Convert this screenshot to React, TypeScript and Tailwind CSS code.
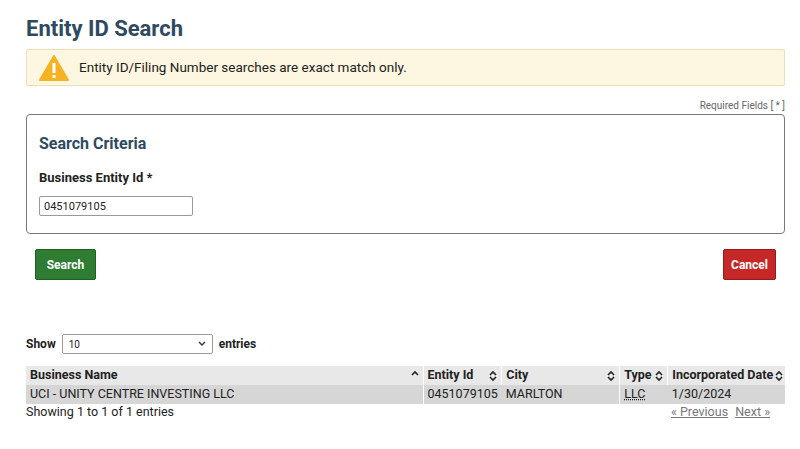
const SortIcon = ({ up = true, down = true }: { up?: boolean; down?: boolean }) => (
  <svg width="8" height="12" viewBox="0 0 8 12" className="shrink-0">
    {up && <path d="M1 5 L4 2 L7 5" fill="none" stroke="#222" strokeWidth="1.6" />}
    {down && <path d="M1 7 L4 10 L7 7" fill="none" stroke="#222" strokeWidth="1.6" />}
  </svg>
);

export default function App() {
  return (
    <main className="w-[800px] h-[449px] bg-white pl-[26px] pr-[15px] pt-[15px] text-[#222]" style={{ fontFamily: 'Roboto, sans-serif' }}>
      <h1 className="text-[22px] font-bold leading-[28px] text-[#2e4a5f]">Entity ID Search</h1>
      <div className="mt-[6px] flex h-[37px] items-center gap-[10px] rounded-[2px] border border-[#eadfb8] bg-[#fdf6e0] px-[12px] text-[13.5px]">
        <svg width="30" height="26" viewBox="0 0 30 26">
          <path d="M15 1 L29 25 L1 25 Z" fill="#f5b324" stroke="#f5b324" strokeWidth="2" strokeLinejoin="round" />
          <rect x="13.5" y="8" width="3" height="10" fill="#fff" />
          <rect x="13.5" y="20" width="3" height="3" fill="#fff" />
        </svg>
        <span>Entity ID/Filing Number searches are exact match only.</span>
      </div>
      <div className="mt-[14px] text-right text-[10px] leading-[12px] text-[#666]">Required Fields [ * ]</div>
      <section className="mt-[2px] h-[120px] rounded-[4px] border border-[#777] px-[12px] pt-[19px]">
        <h2 className="text-[16px] font-bold leading-[20px] text-[#2e4a5f]">Search Criteria</h2>
        <label className="mt-[16px] block text-[13px] font-bold leading-[16px]">Business Entity Id *</label>
        <input
          defaultValue="0451079105"
          className="mt-[10px] h-[20px] w-[154px] rounded-[2px] border border-[#999] px-[4px] text-[11px]"
        />
      </section>
      <div className="mt-[15px] flex justify-between px-[9px]">
        <button className="h-[31px] w-[61px] rounded-[2px] border border-[#1e5e22] bg-[#2e7d32] text-[12px] font-bold text-white">Search</button>
        <button className="h-[31px] w-[53px] rounded-[2px] border border-[#8e1c1c] bg-[#c62828] text-[12px] font-bold text-white">Cancel</button>
      </div>
      <div className="mt-[54px] flex items-center gap-[6px] text-[12px] font-bold">
        <span>Show</span>
        <div className="flex h-[20px] w-[151px] items-center justify-between rounded-[2px] border border-[#999] px-[6px] text-[10px] font-normal">
          <span>10</span>
          <svg width="8" height="6" viewBox="0 0 8 6"><path d="M1 1 L4 4 L7 1" fill="none" stroke="#333" strokeWidth="1.4" /></svg>
        </div>
        <span>entries</span>
      </div>
      <table className="mt-[12px] w-[759px] border-collapse text-[12.5px]">
        <thead>
          <tr className="h-[19px] bg-[#e8e8e8] font-bold">
            <th className="w-[397px] px-[4px] text-left"><div className="flex items-center justify-between">Business Name<SortIcon down={false} /></div></th>
            <th className="w-[77px] border-l border-white px-[4px] text-left"><div className="flex items-center justify-between">Entity Id<SortIcon /></div></th>
            <th className="w-[118px] border-l border-white px-[4px] text-left"><div className="flex items-center justify-between">City<SortIcon /></div></th>
            <th className="w-[48px] border-l border-white px-[4px] text-left"><div className="flex items-center justify-between">Type<SortIcon /></div></th>
            <th className="border-l border-white pl-[4px] pr-[2px] text-left"><div className="flex items-center justify-between">Incorporated Date<SortIcon /></div></th>
          </tr>
        </thead>
        <tbody>
          <tr className="h-[19px] bg-[#d6d6d6]">
            <td className="px-[4px]">UCI - UNITY CENTRE INVESTING LLC</td>
            <td className="border-l border-white px-[4px]">0451079105</td>
            <td className="px-[4px]">MARLTON</td>
            <td className="border-l border-white px-[4px]"><abbr className="underline decoration-dotted">LLC</abbr></td>
            <td className="px-[4px]">1/30/2024</td>
          </tr>
        </tbody>
      </table>
      <div className="flex w-[759px] justify-between text-[12.5px] leading-[16px]">
        <span>Showing 1 to 1 of 1 entries</span>
        <span className="pr-[15px] text-[#777]"><span className="underline">« Previous</span> <span className="ml-[4px] underline">Next »</span></span>
      </div>
    </main>
  );
}
